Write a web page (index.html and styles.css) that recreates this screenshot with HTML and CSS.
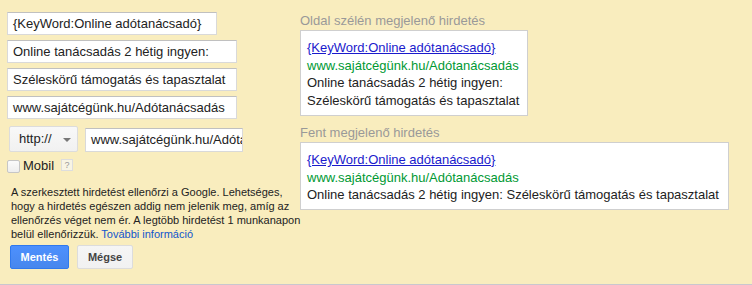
FILE: index.html
```html
<!DOCTYPE html>
<html lang="hu">
<head>
<meta charset="utf-8">
<title>Hirdetés szerkesztése</title>
<link rel="stylesheet" href="styles.css">
</head>
<body>
<div class="wrap">
  <div class="editor">
    <div class="field field-short">{KeyWord:Online adótanácsadó}</div>
    <div class="field">Online tanácsadás 2 hétig ingyen:</div>
    <div class="field">Széleskörű támogatás és tapasztalat</div>
    <div class="field">www.sajátcégünk.hu/Adótanácsadás</div>
    <div class="url-row">
      <div class="select">http://<span class="arrow"></span></div>
      <div class="field field-url">www.sajátcégünk.hu/Adótanácsadás</div>
    </div>
    <div class="mobile-row">
      <span class="checkbox"></span>
      <span class="mobile-label">Mobil</span>
      <span class="help">?</span>
    </div>
    <p class="note">A szerkesztett hirdetést ellenőrzi a Google. Lehetséges, hogy a hirdetés egészen addig nem jelenik meg, amíg az ellenőrzés véget nem ér. A legtöbb hirdetést 1 munkanapon belül ellenőrizzük. <a class="more" href="#">További információ</a></p>
    <div class="buttons">
      <span class="btn btn-primary">Mentés</span>
      <span class="btn btn-default">Mégse</span>
    </div>
  </div>
  <div class="previews">
    <div class="preview-label">Oldal szélén megjelenő hirdetés</div>
    <div class="ad ad-side">
      <a class="ad-title" href="#">{KeyWord:Online adótanácsadó}</a>
      <div class="ad-url">www.sajátcégünk.hu/Adótanácsadás</div>
      <div class="ad-text">Online tanácsadás 2 hétig ingyen:</div>
      <div class="ad-text">Széleskörű támogatás és tapasztalat</div>
    </div>
    <div class="preview-label preview-label-top">Fent megjelenő hirdetés</div>
    <div class="ad ad-top">
      <a class="ad-title" href="#">{KeyWord:Online adótanácsadó}</a>
      <div class="ad-url">www.sajátcégünk.hu/Adótanácsadás</div>
      <div class="ad-text">Online tanácsadás 2 hétig ingyen: Széleskörű támogatás és tapasztalat</div>
    </div>
  </div>
</div>
</body>
</html>
```

FILE: styles.css
```css
* { box-sizing: border-box; }

html, body {
  margin: 0;
  padding: 0;
  background: #f9edbe;
}

body {
  font-family: "Liberation Sans", Arial, sans-serif;
  font-size: 13px;
  color: #222;
}

.wrap {
  display: flex;
  height: 285px;
  border-bottom: 1px solid #c9c7cf;
}

.editor {
  width: 300px;
  padding: 12px 0 0 7px;
  display: flex;
  flex-direction: column;
}

.field {
  width: 230px;
  height: 23px;
  margin-bottom: 5px;
  padding: 0 5px;
  line-height: 21px;
  background: #fff;
  border: 1px solid #d9d9d9;
  border-top-color: #c0c0c0;
  white-space: nowrap;
  overflow: hidden;
}

.field-short { width: 210px; }

.url-row {
  display: flex;
  align-items: flex-start;
  gap: 7px;
  margin-top: 2px;
  padding-left: 2px;
}

.select {
  position: relative;
  width: 69px;
  height: 26px;
  padding-left: 9px;
  line-height: 24px;
  background: linear-gradient(#f8f8f8, #f1f1f1);
  border: 1px solid #dcdcdc;
  border-radius: 2px;
  color: #222;
}

.arrow {
  position: absolute;
  right: 6px;
  top: 11px;
  width: 0;
  height: 0;
  border-left: 4px solid transparent;
  border-right: 4px solid transparent;
  border-top: 4px solid #777;
}

.field-url {
  width: 158px;
  height: 24px;
  margin-top: 2px;
  margin-bottom: 0;
  line-height: 22px;
}

.mobile-row {
  display: flex;
  align-items: center;
  height: 14px;
  margin-top: 7px;
}

.checkbox {
  width: 13px;
  height: 13px;
  border: 1px solid #c6c6c6;
  border-radius: 2px;
  background: linear-gradient(#fbfbfb, #eeeeee);
}

.mobile-label {
  margin-left: 3px;
  font-size: 13px;
  line-height: 14px;
}

.help {
  width: 12px;
  height: 12px;
  margin-left: 7px;
  margin-top: -2px;
  border: 1px solid #ddd;
  background: #f8f4e4;
  color: #999;
  font-size: 9px;
  line-height: 10px;
  text-align: center;
}

.note {
  width: 290px;
  margin: 12px 0 0 4px;
  font-size: 11px;
  line-height: 14px;
  color: #222;
}

.more {
  color: #15c;
  text-decoration: none;
}

.buttons {
  display: flex;
  gap: 8px;
  margin-top: 4px;
  padding-left: 3px;
}

.btn {
  height: 24px;
  padding: 0;
  font-size: 11px;
  font-weight: bold;
  line-height: 22px;
  text-align: center;
  border-radius: 2px;
}

.btn-primary {
  width: 59px;
  color: #fff;
  background: linear-gradient(#4d90fe, #4787ed);
  border: 1px solid #3079ed;
}

.btn-default {
  width: 56px;
  color: #444;
  background: linear-gradient(#f5f5f5, #f1f1f1);
  border: 1px solid #dcdcdc;
}

.previews {
  padding-top: 12px;
  display: flex;
  flex-direction: column;
  align-items: flex-start;
}

.preview-label {
  height: 18px;
  line-height: 18px;
  color: #999;
  font-size: 13px;
}

.preview-label-top {
  margin-top: 8px;
}

.ad {
  background: #fff;
  border: 1px solid #cfcfcf;
  line-height: 17.5px;
  white-space: nowrap;
}

.ad-side {
  width: 228px;
  height: 86px;
  padding: 8px 6px 0 6px;
}

.ad-top {
  width: 429px;
  height: 68px;
  padding: 8px 6px 0 6px;
}

.ad-title {
  color: #1a1acc;
  text-decoration: underline;
}

.ad-url {
  color: #093;
}

.ad-text {
  color: #222;
}
```
